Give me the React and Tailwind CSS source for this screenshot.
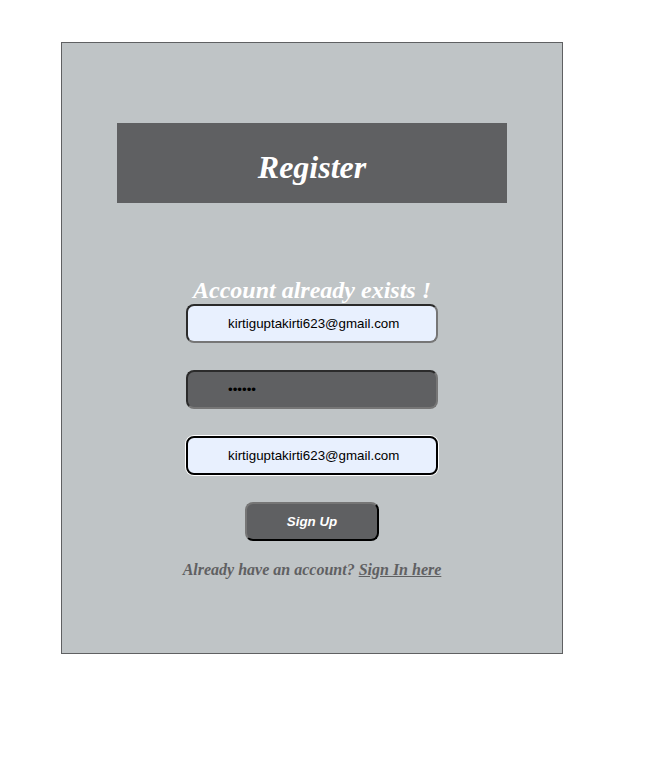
import React, { useState } from 'react';

const inputBase =
  'w-[252px] h-[39px] rounded-[8px] border-2 pl-[40px] pr-[34px] text-[13.33px] text-black outline-none';

const Register = () => {
  const [email] = useState('kirtiguptakirti623@gmail.com');
  const [password] = useState('123456');

  return (
    <div className="w-[502px] h-[612px] border border-[#5f6062] bg-[#bfc4c6] flex flex-col items-center">
      <div className="mt-[80px] w-[390px] h-[80px] bg-[#5f6062] flex items-center justify-center pt-2">
        <h1 className="font-['Liberation_Serif',serif] text-[32px] leading-[40px] font-bold italic text-white">
          Register
        </h1>
      </div>

      <p className="mt-[73px] font-['Liberation_Serif',serif] text-[24px] leading-[28px] font-bold italic text-white">
        Account already exists !
      </p>

      <form className="flex flex-col items-center gap-[27px] font-['Liberation_Sans',Arial,sans-serif]" onSubmit={e => e.preventDefault()}>
        <input
          type="text"
          readOnly
          value={email}
          className={`${inputBase} bg-[#e8f0fe] border-t-[#2b2b2b] border-l-[#2b2b2b] border-b-[#767676] border-r-[#767676]`}
        />
        <input
          type="password"
          readOnly
          value={password}
          className={`${inputBase} bg-[#5f6062] border-t-[#2b2b2b] border-l-[#2b2b2b] border-b-[#767676] border-r-[#767676]`}
        />
        <input
          type="text"
          readOnly
          value={email}
          className={`${inputBase} bg-[#e8f0fe] border-black ring-1 ring-white`}
        />
        <button
          type="submit"
          className="w-[134px] h-[39px] rounded-[8px] border-2 border-t-[#767676] border-l-[#767676] border-b-black border-r-black bg-[#5f6062] text-white text-[13.33px] font-bold italic"
        >
          Sign Up
        </button>
      </form>

      <p className="mt-[19px] font-['Liberation_Serif',serif] text-[16px] leading-[20px] font-bold italic text-[#5f6062]">
        Already have an account? <a href="#" className="underline">Sign In here</a>
      </p>
    </div>
  );
};

export default function App() {
  return (
    <div className="min-h-screen bg-white pt-[42px] pl-[61px]">
      <Register />
    </div>
  );
}
